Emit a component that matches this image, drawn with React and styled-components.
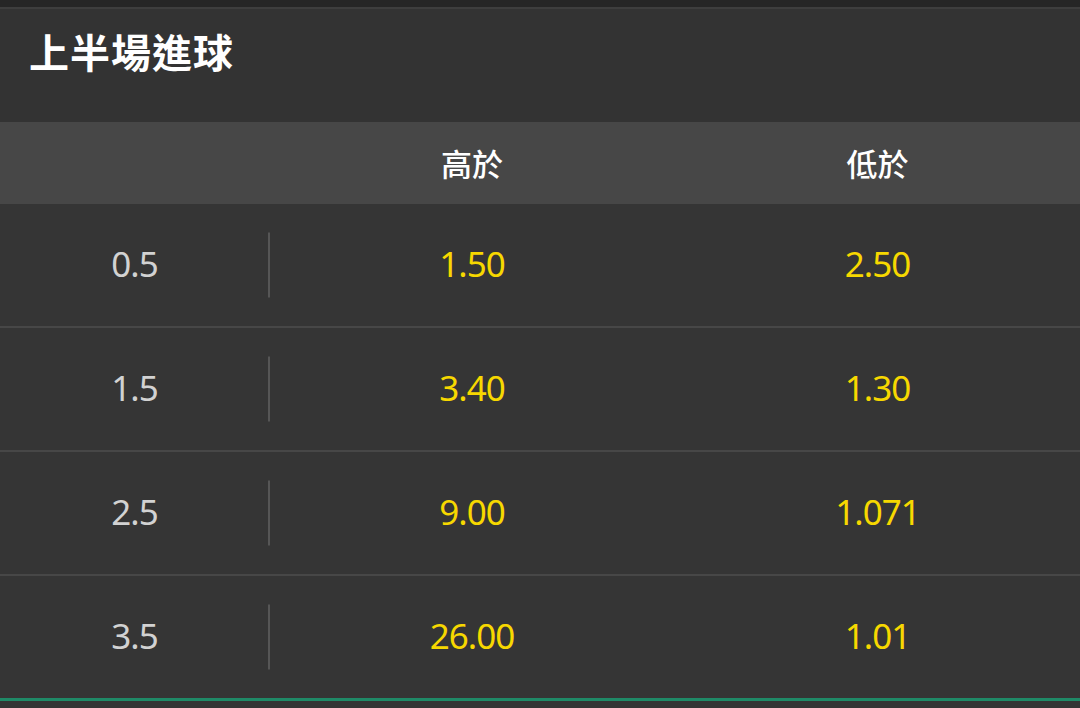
import React from "react";
import styled, { createGlobalStyle } from "styled-components";

const GlobalStyle = createGlobalStyle`
  html, body {
    margin: 0;
    padding: 0;
    background: #343434;
  }
  body {
    font-family: "Noto Sans", "Noto Sans CJK TC", sans-serif;
  }
`;

const Page = styled.div`
  width: 1080px;
  height: 708px;
  overflow: hidden;
  background: #343434;
  border-top: 7px solid #262626;
  box-sizing: border-box;
`;

const TitleBar = styled.div`
  height: 115px;
  box-sizing: border-box;
  border-top: 2px solid #3e3e3e;
  padding: 18px 0 0 29px;
  background: #333333;
`;

const Title = styled.h1`
  margin: 0;
  font-family: "Noto Sans CJK TC", sans-serif;
  font-weight: 700;
  font-size: 40px;
  line-height: 48px;
  color: #ffffff;
  letter-spacing: 1px;
`;

const Grid = styled.div`
  display: grid;
  grid-template-columns: 269px 406px 405px;
`;

const HeadRow = styled(Grid)`
  height: 82px;
  background: #474747;
  align-items: center;
`;

const HeadCell = styled.div`
  text-align: center;
  font-family: "Noto Sans CJK TC", sans-serif;
  font-weight: 500;
  font-size: 31px;
  color: #ffffff;
  padding-bottom: 2px;
`;

const Row = styled(Grid)`
  height: ${p => (p.$last ? "125px" : "124px")};
  box-sizing: border-box;
  align-items: center;
  border-bottom: ${p => (p.$last ? "3px solid #1f8a67" : "2px solid #474747")};
  background: #353535;
`;

const LineCell = styled.div`
  position: relative;
  height: 100%;
  display: flex;
  align-items: center;
  justify-content: center;
  padding-bottom: 4px;
  box-sizing: border-box;
  font-size: 35px;
  color: #d2d2d2;
  letter-spacing: -1px;

  &::after {
    content: "";
    position: absolute;
    right: -1px;
    top: 50%;
    width: 2px;
    height: 65px;
    transform: translateY(-50%);
    background: #565656;
  }
`;

const Odds = styled.div`
  text-align: center;
  padding-bottom: 4px;
  font-size: 35px;
  color: #f7d800;
  letter-spacing: -1px;
`;

const markets = [
  { line: "0.5", over: "1.50", under: "2.50" },
  { line: "1.5", over: "3.40", under: "1.30" },
  { line: "2.5", over: "9.00", under: "1.071" },
  { line: "3.5", over: "26.00", under: "1.01" },
];

const App = () => {
  return (
    <>
      <GlobalStyle />
      <Page>
        <TitleBar>
          <Title>上半場進球</Title>
        </TitleBar>
        <HeadRow>
          <HeadCell />
          <HeadCell>高於</HeadCell>
          <HeadCell>低於</HeadCell>
        </HeadRow>
        {markets.map((m, i) => (
          <Row key={m.line} $last={i === markets.length - 1}>
            <LineCell>{m.line}</LineCell>
            <Odds>{m.over}</Odds>
            <Odds>{m.under}</Odds>
          </Row>
        ))}
      </Page>
    </>
  );
};

export default App;
